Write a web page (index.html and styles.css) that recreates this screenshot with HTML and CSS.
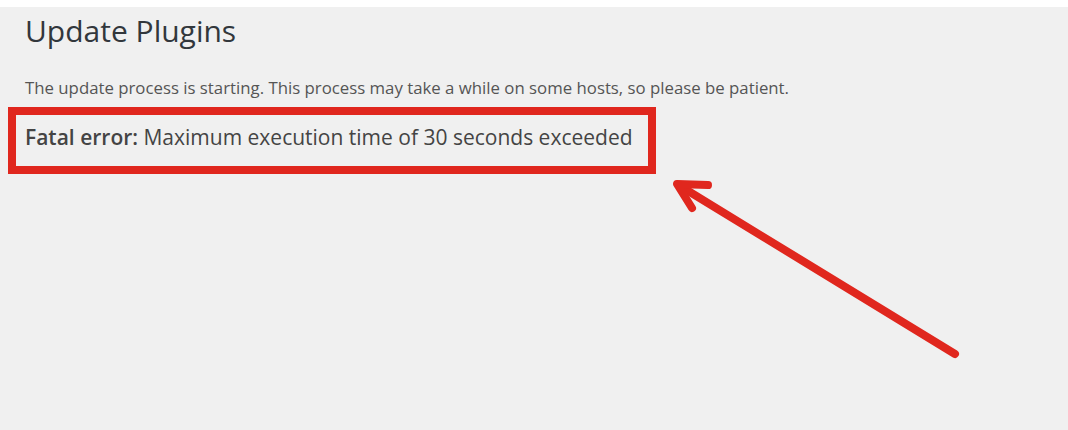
FILE: index.html
```html
<!DOCTYPE html>
<html>
<head>
  <meta charset="utf-8">
  <meta name="viewport" content="width=device-width">
  <title>Update Plugins</title>
  <link rel="stylesheet" href="styles.css">
</head>
<body>
<div class="screen">
  <h1 class="title">Update Plugins</h1>
  <p class="intro">The update process is starting. This process may take a while on some hosts, so please be patient.</p>
  <div class="highlight">
    <p class="error"><b>Fatal error:</b> Maximum execution time of 30 seconds exceeded</p>
  </div>
  <!-- annotation arrow pointing at the error box -->
  <svg class="arrow" width="1068" height="430" viewBox="0 0 1068 430">
    <g fill="none" stroke="#e0271e" stroke-width="8" stroke-linecap="round" stroke-linejoin="round">
      <line x1="955" y1="354" x2="680" y2="186"/>
      <polyline points="708,185 677,184 692,208"/>
    </g>
  </svg>
</div>
</body>
</html>
```
FILE: styles.css
```css
* {
  box-sizing: border-box;
}

html,
body {
  margin: 0;
  height: 100%;
  background-color: #fff;
}

.screen {
  position: relative;
  margin-top: 7px;
  height: calc(100% - 7px);
  padding: 6px 0 0 8px;
  background-color: #f0f0f0;
  font-family: "Open Sans", "Noto Sans", sans-serif;
  overflow: hidden;
}

.title {
  margin: 0 0 0 17px;
  font-size: 30px;
  font-weight: 400;
  line-height: 36px;
  color: #32373c;
}

.intro {
  margin: 28px 0 0 17px;
  font-size: 16.8px;
  line-height: 22px;
  color: #555;
}

.highlight {
  width: 648px;
  height: 67px;
  margin-top: 8px;
  border: 8px solid #e0271e;
  padding: 8px 0 0 9px;
}

.error {
  margin: 0;
  font-size: 21px;
  line-height: 28px;
  color: #444;
}

.error b {
  font-weight: 600;
}

.arrow {
  position: absolute;
  top: -7px;
  left: 0;
  pointer-events: none;
}
```
